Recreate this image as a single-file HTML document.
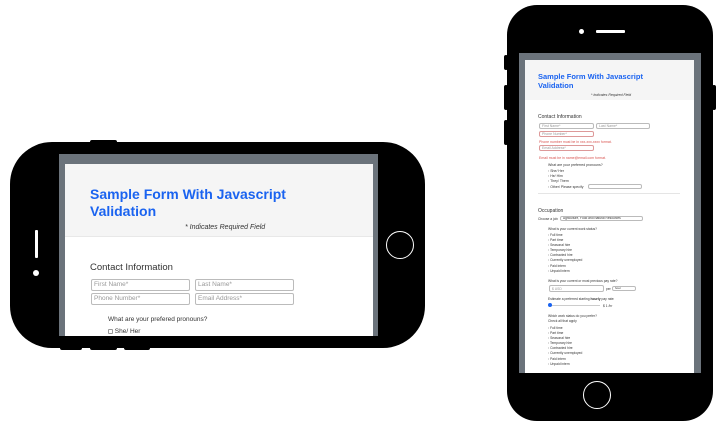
<!DOCTYPE html>
<html><head><style>
*{margin:0;padding:0;box-sizing:border-box}
body{width:721px;height:429px;background:#fff;position:relative;overflow:hidden;font-family:"Liberation Sans",sans-serif}
.a{position:absolute}
.blk{background:#000}
.t{position:absolute;white-space:nowrap;color:#333}
.in{position:absolute;border:1px solid #bbb;border-radius:2px;background:#fff;color:#999;padding-left:2px;white-space:nowrap;overflow:hidden}
.cb{display:inline-block;border:1px solid #999;border-radius:1px;vertical-align:middle}
</style></head><body>

<!-- Landscape phone -->
<div class="a blk" style="left:90px;top:140px;width:27px;height:4px;border-radius:2px"></div>
<div class="a blk" style="left:60px;top:346px;width:22px;height:4px;border-radius:2px"></div>
<div class="a blk" style="left:90px;top:346px;width:27px;height:4px;border-radius:2px"></div>
<div class="a blk" style="left:124px;top:346px;width:26px;height:4px;border-radius:2px"></div>
<div class="a blk" style="left:10px;top:142px;width:415px;height:206px;border-radius:42px"></div>
<div class="a" style="left:35px;top:230px;width:3px;height:28px;background:#fff;border-radius:1px"></div>
<div class="a" style="left:33px;top:270px;width:6px;height:6px;background:#fff;border-radius:50%"></div>
<div class="a" style="left:386px;top:231px;width:28px;height:28px;border:1.5px solid #fff;border-radius:50%"></div>
<div class="a" style="left:59px;top:154px;width:319px;height:182px;background:#6b737b"></div>
<div class="a" style="left:65px;top:164px;width:308px;height:172px;background:#fff;overflow:hidden">
  <div class="a" style="left:0;top:0;width:308px;height:73px;background:#f5f5f5;border-bottom:1px solid #e8e8e8"></div>
  <div class="t" style="left:25px;top:22px;font-size:14px;font-weight:bold;color:#1a63f0;line-height:17px;white-space:normal;width:220px">Sample Form With Javascript Validation</div>
  <div class="t" style="left:120px;top:60px;font-size:7px;font-style:italic;color:#333">* Indicates Required Field</div>
  <div class="t" style="left:25px;top:98px;font-size:9.5px;color:#333">Contact Information</div>
  <div class="in" style="left:26px;top:115px;width:99px;height:12px;font-size:6.5px;line-height:10px">First Name*</div>
  <div class="in" style="left:130px;top:115px;width:99px;height:12px;font-size:6.5px;line-height:10px">Last Name*</div>
  <div class="in" style="left:26px;top:129px;width:99px;height:12px;font-size:6.5px;line-height:10px">Phone Number*</div>
  <div class="in" style="left:130px;top:129px;width:99px;height:12px;font-size:6.5px;line-height:10px">Email Address*</div>
  <div class="t" style="left:43px;top:152px;font-size:6.5px">What are your prefered pronouns?</div>
  <div class="t" style="left:43px;top:164px;font-size:6.5px"><span class="cb" style="width:5px;height:5px"></span> She/ Her</div>
</div>

<!-- Portrait phone -->
<div class="a blk" style="left:504px;top:55px;width:4px;height:15px;border-radius:2px"></div>
<div class="a blk" style="left:504px;top:85px;width:4px;height:25px;border-radius:2px"></div>
<div class="a blk" style="left:504px;top:120px;width:4px;height:25px;border-radius:2px"></div>
<div class="a blk" style="left:712px;top:85px;width:4px;height:25px;border-radius:2px"></div>
<div class="a blk" style="left:507px;top:5px;width:206px;height:416px;border-radius:30px"></div>
<div class="a" style="left:579px;top:29px;width:5px;height:5px;background:#fff;border-radius:50%"></div>
<div class="a" style="left:596px;top:30px;width:29px;height:3px;background:#fff;border-radius:1px"></div>
<div class="a" style="left:583px;top:381px;width:28px;height:28px;border:1.5px solid #fff;border-radius:50%"></div>
<div class="a" style="left:519px;top:53px;width:182px;height:320px;background:#6b737b"></div>
<div class="a" style="left:525px;top:60px;width:169px;height:313px;background:#fff;overflow:hidden;font-size:4px">
  <div class="a" style="left:0;top:0;width:169px;height:40px;background:#f5f5f5"></div>
  <div class="t" style="left:13px;top:12px;font-size:7.5px;font-weight:bold;color:#1a63f0;line-height:9px">Sample Form With Javascript<br>Validation</div>
  <div class="t" style="left:66px;top:33px;font-size:3.5px;font-style:italic">* Indicates Required Field</div>
  <div class="t" style="left:13px;top:54px;font-size:5px">Contact Information</div>
  <div class="in" style="left:14px;top:63px;width:55px;height:6px;font-size:3.5px;line-height:5px">First Name*</div>
  <div class="in" style="left:71px;top:63px;width:54px;height:6px;font-size:3.5px;line-height:5px">Last Name*</div>
  <div class="in" style="left:14px;top:71px;width:55px;height:6px;font-size:3.5px;line-height:5px;border-color:#d99">Phone Number*</div>
  <div class="t" style="left:14px;top:80px;font-size:3.5px;color:#d9534f">Phone number must be in xxx-xxx-xxxx format.</div>
  <div class="in" style="left:14px;top:85px;width:55px;height:6px;font-size:3.5px;line-height:5px;border-color:#d99">Email Address*</div>
  <div class="t" style="left:14px;top:96px;font-size:3.5px;color:#d9534f">Email must be in name@email.com format.</div>
  <div class="t" style="left:23px;top:103px;font-size:3.5px">What are your preferred pronouns?</div>
  <div class="t" style="left:23px;top:109px;font-size:3.5px;line-height:5.2px">▫ She/ Her<br>▫ He/ Him<br>▫ They/ Them<br>▫ Other/ Please specify</div>
  <div class="in" style="left:63px;top:124px;width:54px;height:5px"></div>
  <div class="a" style="left:13px;top:133px;width:142px;height:1px;background:#e5e5e5"></div>
  <div class="t" style="left:13px;top:148px;font-size:5px">Occupation</div>
  <div class="t" style="left:13px;top:157px;font-size:3.3px">Choose a job:</div>
  <div class="in" style="left:35px;top:156px;width:83px;height:5px;font-size:3.2px;line-height:3px;color:#333">Agriculture, Food and Natural Resources</div>
  <div class="t" style="left:23px;top:167px;font-size:3.3px">What is your current work status?</div>
  <div class="t" style="left:23px;top:173px;font-size:3.3px;line-height:5.1px">▫ Full time<br>▫ Part time<br>▫ Seasonal hire<br>▫ Temporary hire<br>▫ Contracted hire<br>▫ Currently unemployed<br>▫ Paid intern<br>▫ Unpaid intern</div>
  <div class="t" style="left:23px;top:219px;font-size:3.3px">What is your current or most previous pay rate?</div>
  <div class="in" style="left:24px;top:225px;width:55px;height:7px;font-size:3.3px;line-height:6px">$ USD</div>
  <div class="t" style="left:81px;top:227px;font-size:3.3px">per</div>
  <div class="in" style="left:87px;top:226px;width:24px;height:5px;font-size:3px;line-height:3px;color:#333">hour</div>
  <div class="t" style="left:23px;top:237px;font-size:3.3px">Estimate a preferred starting <b>hourly</b> pay rate:</div>
  <div class="a" style="left:25px;top:245px;width:50px;height:1px;background:#ccc"></div>
  <div class="a" style="left:23px;top:243px;width:4px;height:4px;background:#1a63f0;border-radius:50%"></div>
  <div class="t" style="left:78px;top:244px;font-size:3.3px">$ 1 /hr</div>
  <div class="t" style="left:23px;top:254px;font-size:3.3px;line-height:5px">Which work status do you prefer?<br>Check all that apply</div>
  <div class="t" style="left:23px;top:266px;font-size:3.3px;line-height:5.1px">▫ Full time<br>▫ Part time<br>▫ Seasonal hire<br>▫ Temporary hire<br>▫ Contracted hire<br>▫ Currently unemployed<br>▫ Paid intern<br>▫ Unpaid intern</div>
</div>
</body></html>
